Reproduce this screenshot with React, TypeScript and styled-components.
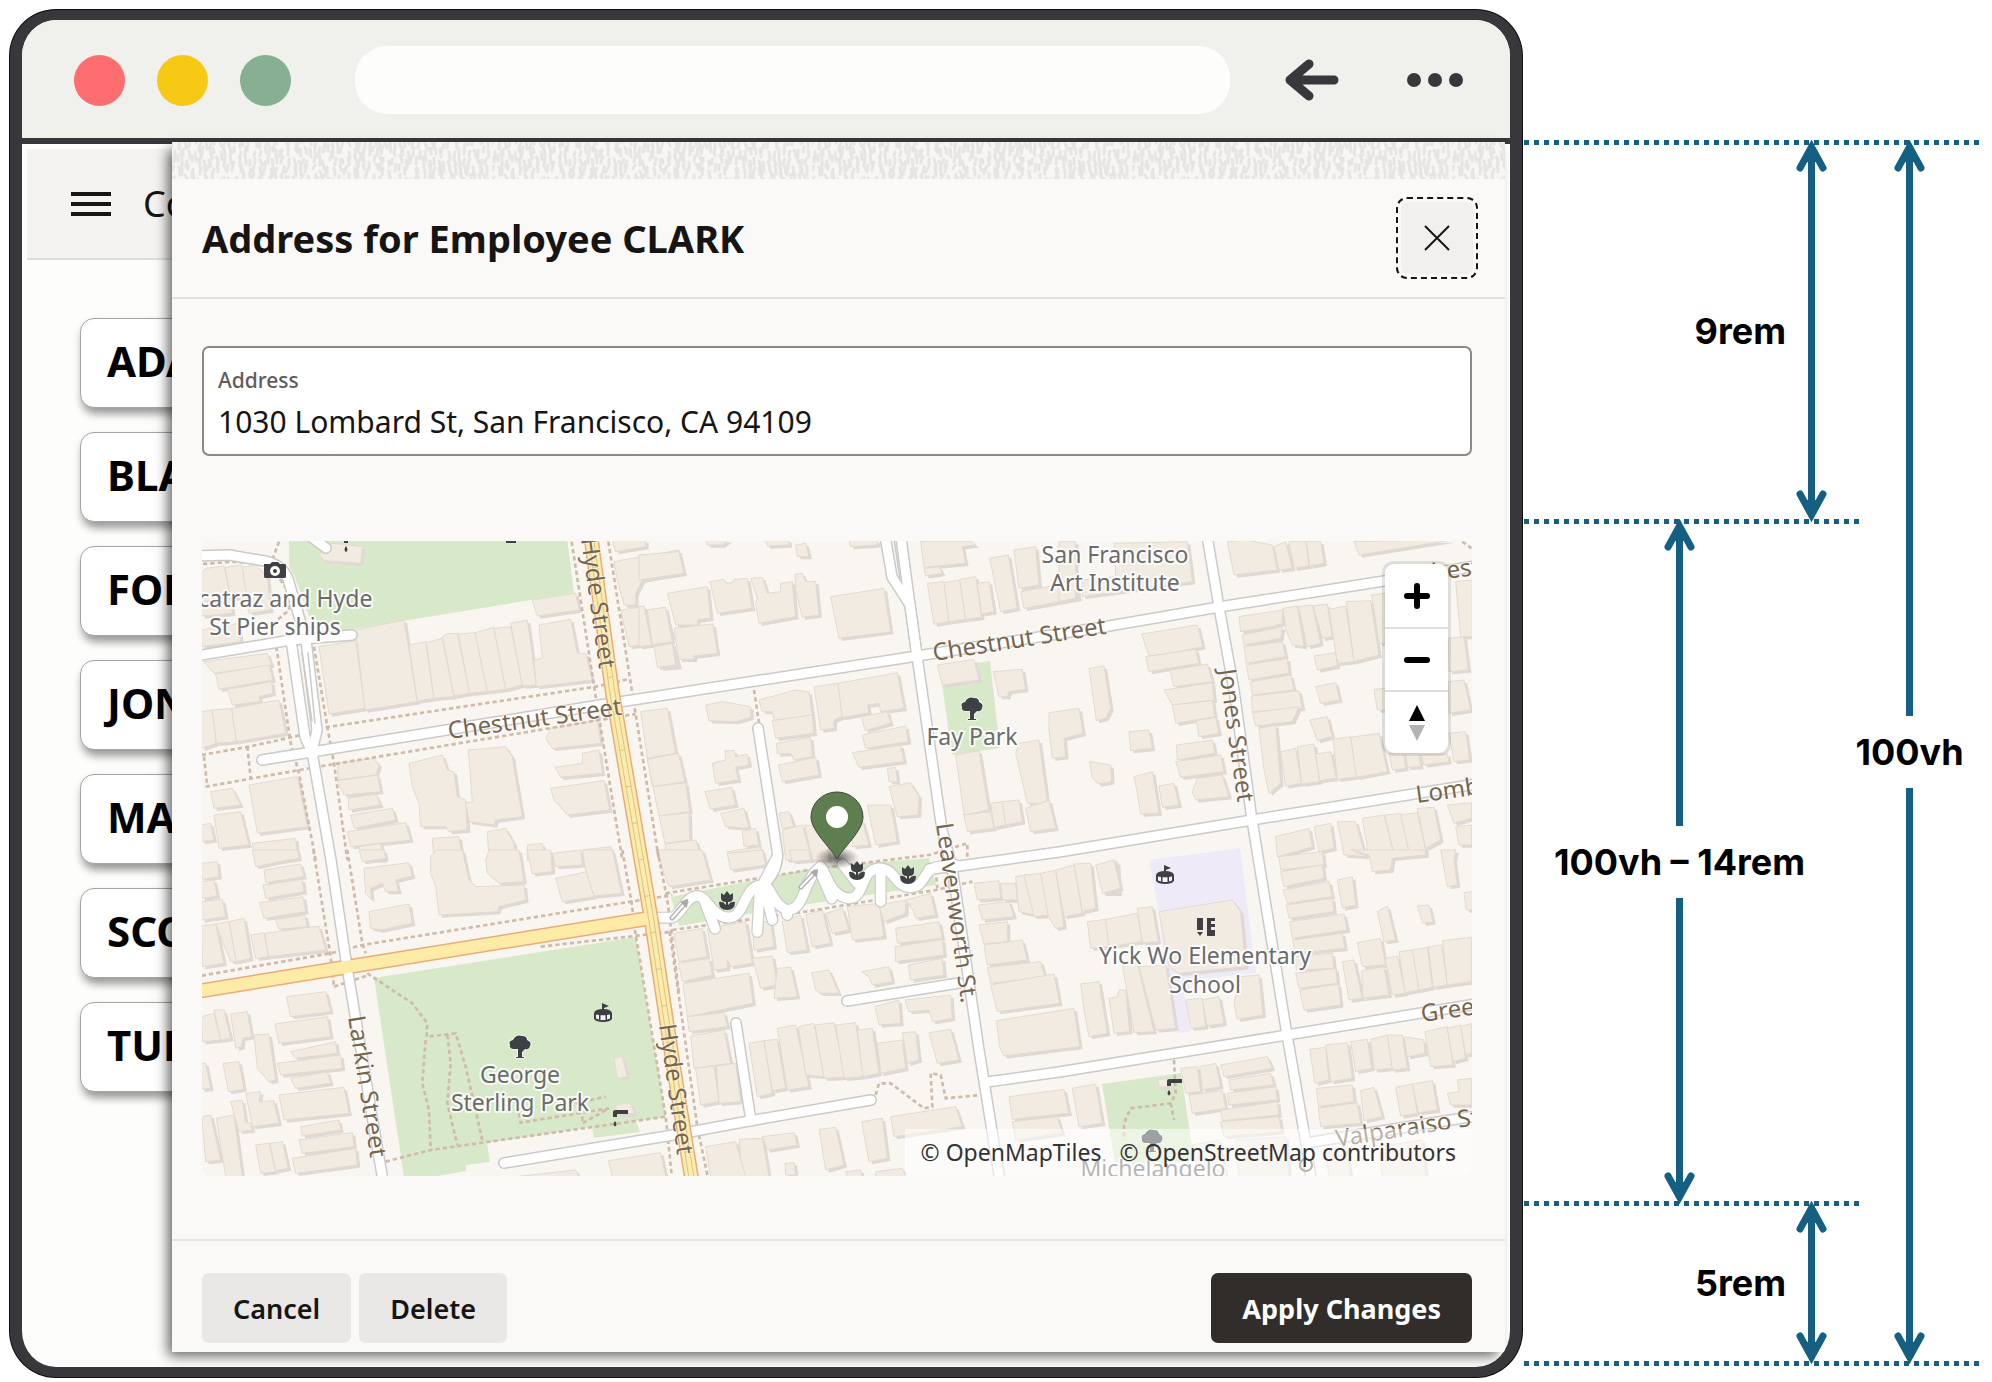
import React from "react";
import styled, { createGlobalStyle } from "styled-components";

const UI_FONT = `"Noto Sans", "Open Sans", sans-serif`;
const NOTE_FONT = `Inter, "Liberation Sans", sans-serif`;
const INK = "#161513";
const FRAME = "#38373c";
const BLUE = "#156082";

const GlobalStyle = createGlobalStyle`
  *, *::before, *::after { box-sizing: border-box; }
  body { margin: 0; background: #fff; font-family: ${UI_FONT}; color: ${INK}; }
  button, input { font: inherit; color: inherit; }
`;

/* ---------- page ---------- */

const Root = styled.div`
  display: grid;
  grid-template-columns: minmax(0, 1514fr) minmax(0, 469fr);
  min-height: 100vh;
  padding: 10px 0 5px 9px;
`;

const Browser = styled.section`
  display: flex;
  flex-direction: column;
  overflow: hidden;
  border: solid ${FRAME};
  border-width: 10px 12px;
  border-radius: 46px;
  margin: 0 1px;
  box-shadow: 0 0 0 1px #0d0d0f;
  background: #fdfdfb;
`;

const Toolbar = styled.header`
  display: flex;
  align-items: center;
  height: 124px;
  padding: 2px 46px 0 52px;
  border-bottom: 6px solid ${FRAME};
  background: #f0f0ed;
`;

const Lights = styled.div`
  display: flex;
  gap: 32px;
  margin-right: 64px;
`;

const Light = styled.span<{ $color: string }>`
  width: 51px;
  height: 51px;
  border-radius: 50%;
  background: ${(p) => p.$color};
`;

const UrlBar = styled.input`
  flex: 1;
  min-width: 0;
  height: 68px;
  padding: 0 30px;
  border: 0;
  border-radius: 32px;
  background: #fdfdfc;
`;

const ToolButton = styled.button<{ $gap: number }>`
  display: flex;
  margin-left: ${(p) => p.$gap}px;
  padding: 0;
  border: 0;
  background: none;
`;

const Viewport = styled.div`
  position: relative;
  display: flex;
  flex: 1;
  flex-direction: column;
  padding: 5px 5px 0;
`;

const PageHeader = styled.div`
  display: flex;
  align-items: center;
  gap: 32px;
  height: 111px;
  padding: 0 44px;
  border-bottom: 2px solid #e0dcda;
  background: #f4f3f2;
  font-size: 36px;
`;

const MenuButton = styled.button`
  display: flex;
  flex-direction: column;
  gap: 6px;
  width: 40px;
  padding: 0;
  border: 0;
  background: none;
`;

const MenuBar = styled.span`
  height: 4px;
  width: 100%;
  background: ${INK};
`;

const Cards = styled.ul`
  display: flex;
  flex-direction: column;
  gap: 24px;
  margin: 0;
  padding: 58px 53px;
  list-style: none;
`;

const Card = styled.li`
  height: 90px;
  padding: 0 26px;
  border: 1px solid #a5a5a5;
  border-radius: 14px;
  background: #fff;
  box-shadow: 2px 6px 8px rgba(0, 0, 0, 0.4);
  color: #000;
  font-size: 42px;
  font-weight: 700;
  line-height: 84px;
`;

/* ---------- drawer ---------- */

const Drawer = styled.div`
  position: absolute;
  inset: -2px 5px 15px 150px;
  display: flex;
  flex-direction: column;
  background: #faf9f7;
  box-shadow: -6px 6px 12px -2px rgba(0, 0, 0, 0.6);
`;

const Strip = styled.svg`
  display: block;
  flex: none;
  width: 100%;
  height: 37px;
`;

const DrawerHeader = styled.div`
  display: flex;
  align-items: center;
  justify-content: space-between;
  height: 120px;
  padding: 0 27px 0 30px;
  border-bottom: 2px solid #e3e1df;
`;

const Title = styled.h1`
  margin: 0;
  font-size: 38px;
  font-weight: 700;
  line-height: 48px;
`;

const CloseButton = styled.button`
  display: flex;
  align-items: center;
  justify-content: center;
  width: 72px;
  height: 72px;
  margin: 5px;
  padding: 0;
  border: 0;
  border-radius: 6px;
  outline: 2px dashed ${INK};
  outline-offset: 3px;
  background: #f1f0ee;
`;

const DrawerBody = styled.div`
  display: flex;
  flex: 1;
  flex-direction: column;
  gap: 85px;
  padding: 47px 33px 63px 30px;
`;

const Field = styled.label`
  display: flex;
  flex-direction: column;
  height: 110px;
  padding: 17px 14px 0;
  border: 2px solid #8b8885;
  border-radius: 7px;
  background: #fff;
`;

const FieldName = styled.span`
  color: #5f5c59;
  font-size: 21px;
  font-weight: 500;
  line-height: 30px;
`;

const FieldInput = styled.input`
  height: 52px;
  padding: 0;
  border: 0;
  outline: 0;
  background: none;
  font-size: 30px;
`;

const MapBox = styled.div`
  position: relative;
  flex: 1;
  min-height: 300px;
  overflow: hidden;
  border-radius: 8px;
  background: #f9f6f2;
`;

const MapDrawing = styled.svg`
  position: absolute;
  inset: 0;
  width: 100%;
  height: 100%;
  font-family: ${UI_FONT};
  font-size: 24px;
`;

const PlaceNames = styled.g`
  font-size: 23px;
  text-anchor: middle;
`;

const MapControls = styled.div`
  position: absolute;
  top: 23px;
  right: 24px;
  width: 63px;
  border-radius: 9px;
  background: #fff;
  box-shadow: 0 0 0 3px rgba(0, 0, 0, 0.1);
`;

const MapControl = styled.button`
  display: flex;
  align-items: center;
  justify-content: center;
  width: 63px;
  height: 63px;
  padding: 0;
  border: 0;
  background: none;
  & + & {
    border-top: 2px solid #dedede;
  }
`;

const Attribution = styled.div`
  position: absolute;
  right: 0;
  bottom: 0;
  display: flex;
  gap: 18px;
  padding: 0 16px;
  background: rgba(255, 255, 255, 0.5);
  font-size: 23px;
  line-height: 47px;
`;

const CreditLink = styled.a`
  color: #333;
  text-decoration: none;
`;

const DrawerFooter = styled.div`
  display: flex;
  gap: 8px;
  padding: 32px 33px 9px 30px;
  border-top: 2px solid #e6e4e2;
`;

const Button = styled.button<{ $primary?: boolean }>`
  height: 70px;
  padding: 0 31px;
  border: 0;
  border-radius: 7px;
  background: ${(p) => (p.$primary ? "#312d2a" : "#e9e8e6")};
  color: ${(p) => (p.$primary ? "#fff" : INK)};
  font-size: 27px;
  font-weight: ${(p) => (p.$primary ? 700 : 600)};
  margin-left: ${(p) => (p.$primary ? "auto" : "0")};
`;

/* ---------- measurements ---------- */

const Measures = styled.aside`
  display: grid;
  grid-template-columns: minmax(0, 1fr) 120px;
  grid-template-rows: 5px 374px 5px minmax(0, 1fr) 5px 155px 5px;
  padding: 130px 8px 11px 1px;
  color: #000;
  font-family: ${NOTE_FONT};
  font-size: 36px;
  font-weight: 700;
  line-height: 44px;
`;

const Guide = styled.div<{ $row: number; $wide?: boolean }>`
  grid-row: ${(p) => p.$row};
  grid-column: ${(p) => (p.$wide ? "1 / 3" : "1 / 2")};
  background: repeating-linear-gradient(90deg, ${BLUE} 0 5px, transparent 5px 10px);
`;

const SideMeasure = styled.div<{ $row: number }>`
  grid-row: ${(p) => p.$row};
  grid-column: 1;
  display: flex;
  align-items: center;
  justify-content: flex-end;
  gap: 10px;
  margin: -5px 0 -3px;
  padding-right: 37px;
`;

const StackMeasure = styled.div<{ $rows: string; $column: number }>`
  grid-row: ${(p) => p.$rows};
  grid-column: ${(p) => p.$column};
  display: flex;
  flex-direction: column;
  align-items: center;
  gap: 14px;
  margin: -5px 0 -3px;
  padding-right: 29px;
  white-space: nowrap;
`;

const ArrowBox = styled.span<{ $full?: boolean }>`
  display: flex;
  flex-direction: column;
  align-items: center;
  ${(p) => (p.$full ? "align-self: stretch;" : "flex: 1;")}
  min-height: 0;
`;

const Shaft = styled.span`
  flex: 1;
  width: 7px;
  background: ${BLUE};
`;

const HeadSvg = styled.svg`
  display: block;
  flex: none;
`;

const Head = ({ down }: { down?: boolean }) => (
  <HeadSvg width="31" height="32" viewBox="0 0 31 32" aria-hidden="true">
    <g transform={down ? "rotate(180 15.5 16)" : undefined}>
      <path d="M4 28 L15.5 7 L27 28" fill="none" stroke={BLUE} strokeWidth="7" strokeLinecap="round" />
      <path d="M15.5 7V32" stroke={BLUE} strokeWidth="7" />
      <path d="M15.5 4 L8 22 H23Z" fill={BLUE} />
    </g>
  </HeadSvg>
);

const Arrow = ({ up, down, full }: { up?: boolean; down?: boolean; full?: boolean }) => (
  <ArrowBox $full={full}>
    {up && <Head />}
    <Shaft />
    {down && <Head down />}
  </ArrowBox>
);

/* ---------- map data: 480x330 tiles, drawn at three units per pixel ---------- */

type Tile = { x: number; y: number; buildings: string[]; paths: string[] };

const list = (s: string) => s.split("|").map((p) => p.trim());

const tiles: Tile[] = [
  {
    x: -3,
    y: -11,
    buildings: list(
      "20,115 75,108 95,205 8,215 8,130|78,112 128,105 150,200 95,205|130,112 170,105 205,140 215,240 150,250|8,215 95,205 100,250 8,258|8,300 120,280 125,335 8,350|15,395 205,370 218,405 45,430|50,432 210,405 222,450 60,478|85,478 218,455 222,490 180,500 185,515 100,525|8,545 40,540 52,640 8,655|40,540 98,535 112,635 52,640|98,535 240,510 260,610 112,635|360,75 400,40 490,50 485,100 375,92|360,350 470,332 498,535 390,552|470,300 615,270 655,515 498,540|630,345 680,335 705,505 655,513|682,338 730,325 765,500 705,505|730,320 740,312 775,310 812,490 765,498|778,312 828,308 865,485 812,490|828,308 885,292 920,478 865,485|885,295 935,290 970,465 920,478|935,280 985,270 1012,465 970,468|1020,285 1115,268 1135,370 1160,370 1180,450 1012,470 1005,390 1030,385|1000,210 1130,190 1140,240 1015,258|1245,95 1440,60 1440,130 1330,150 1310,190 1310,225 1275,225 1255,150|1240,30 1340,30 1340,50 1250,65|1265,240 1335,230 1360,340 1290,350|1345,240 1395,232 1420,320 1362,330|1365,345 1420,338 1440,410 1385,415|415,700 525,685 540,705 530,735 418,750|415,752 535,735 545,785 435,795|448,805 530,792 545,825 450,840|455,855 580,835 590,870 465,895|445,905 620,878 635,930 455,950|630,700 730,675 745,720 765,725 775,800 800,810 805,900 750,905 740,890 665,890 660,820 640,770|808,660 920,650 940,680 945,715 970,860 890,870 885,885 810,875 800,820 820,815|1040,625 1055,595 1195,570 1205,640 1060,655|1150,670 1200,660 1210,730 1085,742 1068,712 1150,700|1055,775 1215,752 1232,840 1105,855 1065,810|1330,545 1405,540 1430,670 1345,680|1345,685 1440,675 1440,765 1360,770|35,785 100,775 125,825 45,835|45,855 125,845 150,945 60,955|150,765 295,740 325,890 175,910|8,885 35,880 45,930 8,935|160,940 290,925 295,975 170,990|700,925 780,920 790,990 705,990|865,905 920,895 945,940 950,990 870,990|985,945 1030,940 1040,990 985,990|1150,960 1235,950 1240,990 1150,990|480,950 545,940 555,990 490,990"
    ),
    paths: list(
      "1118,35 1190,500 1270,990|1228,35 1300,490 1380,990|380,592 1190,470 1290,447|20,770 370,708 1310,552|8,675 150,650 330,610|15,680 25,770|145,650 155,745|232,350 275,640 300,730 350,990|345,350 385,590 405,700 445,990|240,35 220,90|230,130 275,195 270,240 235,270|12,102 100,95 180,100"
    ),
  },
  {
    x: 437,
    y: -11,
    buildings: list(
      "0,75 120,65 135,130 0,150|85,190 205,170 215,265 175,270 175,285 110,285|213,155 255,148 262,160 280,158 285,148 325,145 340,235 235,250|335,145 370,142 385,190 425,185 425,160 460,155 470,260 360,280 350,220 355,205|468,133 490,130 500,155 530,155 540,255 490,262 470,180|575,200 735,175 755,305 600,325|25,240 80,232 100,335 40,345|105,295 222,282 235,370 165,378 165,388 120,388|45,350 100,340 110,405 55,412|0,230 15,228 38,345 0,350|470,45 500,40 510,80 475,80|200,30 270,30 250,45 205,45|380,30 450,30 450,45 385,48|630,30 715,30 715,45 635,50|845,35 1000,35 1010,45 970,50 980,100 855,112|855,115 900,110 910,130 860,138|865,160 915,155 930,275 885,283|915,158 962,150 980,268 930,275|962,148 1010,140 1028,262 980,268|1015,160 1050,155 1065,245 1028,252|1052,85 1108,75 1135,235 1085,245|1125,60 1190,50 1200,165 1140,175|1145,185 1310,155 1320,205 1155,235|5,545 85,535 110,670 25,685|25,688 118,670 138,755 42,770|42,770 140,758 152,845 60,858|60,858 150,848 152,930 78,940|78,942 170,930 190,990 85,990|200,525 250,515 335,530 335,562 290,575 210,572|360,510 470,480 510,485 520,560 405,570 400,545 370,545|525,470 597,460 610,560 585,570 585,595 545,600|597,460 775,428 795,535 725,545 720,520 685,525 690,548 610,563|400,572 520,555 525,610 410,625|412,640 515,622 520,680 465,690 455,670 415,672|418,705 530,682 540,735 430,755|668,560 745,545 755,580 678,602|670,615 800,588 808,635 680,655|640,668 785,645 795,695 660,712|220,700 260,690 258,662 285,662 290,680 325,672 330,705 290,712 298,750 230,760|198,785 278,772 290,825 215,838|245,850 315,835 330,895 260,890|310,905 350,895 360,945 315,950|265,965 365,950 370,990 270,990|430,900 490,885 520,990 440,990|497,885 560,890 570,990 520,990|420,850 450,845 465,890 430,895|745,715 770,712 775,755 750,755|750,770 815,758 840,800 838,855 775,860|685,825 755,825 775,935 710,945|640,880 670,870 690,945 640,950|895,405 1005,388 1020,450 910,465|1063,425 1150,418 1160,478 1110,485 1105,500 1080,500|1350,415 1395,408 1415,535 1400,565 1372,572|1230,548 1320,535 1332,610 1275,625 1280,680 1240,685 1230,600|1352,695 1415,705 1418,755 1380,762 1360,745|950,675 1020,662 1045,815 1050,840 975,855|1130,670 1140,640 1200,630 1220,780 1225,820 1165,820|975,855 1055,845 1065,895 985,905|1055,820 1090,815 1100,885 1065,892|1090,815 1140,810 1150,875 1100,885|1160,835 1230,810 1250,895 1175,905"
    ),
    paths: list("345,480 360,580"),
  },
  {
    x: 857,
    y: -11,
    buildings: list(
      "505,35 560,30 640,45 655,120 525,135|645,50 680,35 700,115 660,120|690,35 740,35 750,108 705,115|742,35 785,35 795,100 752,108|885,35 1180,30 900,75|165,40 385,35 400,155 70,200 70,150 170,140|0,35 50,35 50,205 0,215|248,312 415,285 432,350 335,370 270,378|260,380 410,358 420,400 270,425|332,420 445,402 460,455 345,470|315,480 460,458 465,510 340,525|340,525 460,512 468,560 350,580|412,572 470,562 480,610 420,620|352,645 460,630 468,670 355,690|350,695 485,675 495,725 365,742|400,785 415,745 490,735 510,800 410,810|210,605 270,600 280,655 215,662|225,740 280,725 300,850 245,852 235,790|300,768 345,760 360,825 310,832|540,260 670,240 670,280 640,290 545,305|550,315 670,290 665,325 555,345|555,350 670,335 680,380 562,400|562,405 685,385 690,430 570,450|575,455 695,435 705,480 580,495|578,498 720,482 730,535 580,545|580,548 720,530 700,575 590,588|600,595 650,585 655,640 665,760 630,790 615,720|672,235 715,228 735,350 700,345 680,300|718,230 760,225 785,340 745,350|762,228 805,222 820,320 790,325|810,238 860,228 885,395 835,400|862,215 935,212 960,375 885,395|938,195 978,190 978,340 960,340|765,378 830,368 835,408 775,420|770,470 830,458 842,510 785,520|752,570 805,560 820,620 775,632|665,665 710,655 728,760 680,768|715,650 765,642 782,755 728,762|770,672 815,665 832,745 782,752|822,628 875,620 895,740 835,748|875,622 960,610 985,725 892,742|990,670 1035,670 1040,715 1000,720|1040,670 1080,670 1085,710 1045,712|1085,672 1165,672 1170,695 1095,705|1170,610 1220,605 1232,690 1185,695|1168,455 1215,450 1235,540 1170,550|1168,325 1215,320 1228,420 1170,425|1190,155 1240,150 1240,320 1205,320|945,478 980,475 980,540 955,540|650,920 750,895 760,950 710,965 655,980|765,890 815,880 825,955 780,965|835,875 890,875 920,980 855,975|910,865 975,855 1005,970 930,985|977,855 1025,850 1050,965 1005,972|1025,855 1075,848 1100,960 1050,965|1075,835 1125,832 1145,930 1100,955|1165,825 1238,818 1238,865 1185,880|1190,890 1238,885 1238,945 1200,945"
    ),
    paths: list("1210,35 1238,55"),
  },
  {
    x: -3,
    y: 309,
    buildings: list(
      "8,40 55,35 60,80 8,88|8,95 45,90 55,138 8,145|8,155 70,148 80,200 8,210|160,0 295,0 300,25 240,35 170,50|195,60 305,42 315,80 200,98|192,105 310,88 315,125 200,145|182,158 312,140 320,185 195,205|230,208 318,195 325,230 240,238|8,228 50,222 75,340 10,350|50,222 90,215 112,335 95,335|90,215 135,205 155,325 112,335|155,255 195,248 208,320 170,325|197,250 360,228 380,300 208,320|480,0 555,0 560,25 490,35|495,55 630,38 640,78 590,90 600,125 560,125 550,100 515,115 518,150 500,130|510,185 630,162 640,220 545,240 515,235|695,20 710,0 790,0 810,90 830,110 975,105 980,150 900,170 895,185 720,195 710,110 695,70|860,30 870,0 960,0 975,95 900,100 865,70|985,0 1055,0 1060,65 1000,72|1060,10 1145,0 1150,45 1070,50|1070,85 1165,65 1185,140 1090,155|1150,0 1240,0 1268,130 1185,138 1160,60|262,440 380,425 395,485 275,500|228,522 385,500 395,560 240,580|275,605 410,575 415,610 290,625|235,640 425,615 430,655 245,675|275,685 385,665 395,700 290,715|240,735 435,712 450,790 255,810|305,830 420,810 425,840 310,858|300,870 460,848 465,890 310,910|280,925 470,895 475,945 290,970|8,500 45,490 65,570 10,575|45,480 75,480 95,565 65,570|95,492 145,485 158,560 130,565 128,590 110,595|165,555 210,552 230,690 210,695 175,655|72,640 120,635 135,718 88,725|8,640 20,640 35,715 8,718|140,730 185,725 180,755 225,752 240,820 160,830|95,755 130,750 140,815 155,820 160,840 120,845|52,805 105,795 130,980 80,980|8,800 35,795 65,930 20,935|170,885 210,880 230,965 185,970|212,880 250,875 268,955 230,962|950,980 1130,960 1140,980|1228,932 1385,908 1400,980 1240,980|1245,625 1270,620 1285,680 1255,685|1250,765 1295,758 1305,790 1255,795"
    ),
    paths: list(
      "1270,0 1298,160 1308,240 1400,800 1418,975|1375,0 1405,150 1440,430|343,0 395,320 405,410|445,0 490,280 500,310|8,377 395,310 490,285 1295,155 1420,135|1025,290 1420,245|405,410 510,375|505,370 640,460 685,520 683,560 770,550 800,650 850,870|680,570 670,700 690,780 695,900|745,555 755,640 745,760 775,885|560,935 695,900 1400,800|960,790 965,818 1230,775 1150,820 1150,790|1130,760 1220,740"
    ),
  },
  {
    x: 437,
    y: 309,
    buildings: list(
      "50,0 190,0 215,90 90,110|265,10 370,0 380,45 275,60|450,0 510,0 515,30 460,35|105,250 190,235 205,320 120,335|205,235 320,215 340,340 275,350 265,330 265,355 225,360|340,215 395,215 405,290 345,300|430,215 485,195 505,300 445,308|500,195 550,180 575,280 520,290|560,190 610,175 630,240 580,250|625,170 720,160 735,260 640,270|720,165 800,150 800,190 735,215|800,150 875,130 890,195 830,205 825,185|770,235 900,215 910,265 775,280|768,290 910,268 915,315 770,335|808,345 910,325 915,375 815,390|118,340 210,325 220,375 130,395|132,400 330,370 342,460 145,500|145,500 255,488 265,530 150,545|155,558 255,540 275,640 165,655|170,655 225,648 240,755 185,765|232,648 290,640 305,755 240,760|340,325 400,318 415,405 365,415|415,355 455,352 475,440 405,445|518,368 570,360 600,430 545,430 530,420|668,365 750,350 760,395 700,405 690,380|708,470 780,450 785,520 720,525|798,450 935,435 940,505 880,515 870,480 810,485|330,580 375,572 400,730 355,740|375,572 415,568 440,715 400,722|415,535 470,525 510,710 445,720|478,530 525,520 555,680 500,675|528,525 585,518 620,682 555,685|590,525 650,518 672,680 615,685|655,540 700,535 720,670 672,680|715,580 790,570 800,655 725,670|790,548 830,545 840,630 805,640|870,548 935,538 960,630 895,640|1005,100 1080,92 1085,145 1015,150|1085,100 1130,100 1135,150 1090,150|1018,165 1110,155 1125,200 1030,210|1020,225 1105,215 1105,275 1035,282|1035,285 1150,270 1165,330 1045,345|1045,352 1205,335 1218,380 1055,400|1055,405 1245,372 1262,460 1075,485|1072,512 1305,475 1322,590 1095,618 1082,590|1130,80 1160,75 1185,195 1140,185|1155,75 1205,70 1230,195 1185,200|1205,70 1250,60 1275,230 1250,235 1228,200|1250,60 1305,45 1330,190 1275,200|1305,42 1355,40 1370,175 1330,185|1375,45 1435,35 1440,130 1395,130|1325,402 1380,395 1405,550 1350,560 1335,480|1110,740 1275,718 1290,790 1120,808|1120,815 1255,800 1270,850 1130,870|1300,715 1370,702 1390,820 1320,830|755,800 950,770 970,830 765,860|668,815 730,805 745,925 690,935|540,838 590,832 615,945 560,960|370,860 465,848 475,885 385,900|300,868 370,865 390,980 310,980|200,890 290,875 320,980 215,980|438,940 465,938 470,975 440,975|620,965 665,960 670,980 625,980|710,965 790,955 800,980 710,980"
    ),
    paths: list(
      "80,130 540,55 870,15 985,-20 985,20|100,240 500,185 890,120 1000,95|890,60 895,115|92,245 175,830 205,975|710,735 720,700 755,700 855,775 880,770 875,670 905,675 920,745 1025,735"
    ),
  },
  {
    x: 857,
    y: 309,
    buildings: list(
      "110,45 165,30 185,115 130,130|85,215 140,208 150,290 95,295|140,208 235,190 250,275 150,290|235,175 280,170 298,275 250,280|300,185 520,150 545,185 560,350 360,370 330,350|150,445 175,440 180,420 200,420 212,545 165,550|190,345 235,340 285,545 225,548|240,350 320,345 350,535 290,540|380,450 430,445 440,530 395,535|430,450 480,440 495,520 445,528|525,460 545,380 600,375 612,495 535,508|660,20 790,5 795,45 665,60|665,65 790,45 795,85 675,110|672,120 810,95 820,140 685,160|682,165 820,145 825,185 690,205|692,215 855,192 865,240 700,265|700,270 850,250 858,295 710,310|708,320 820,310 825,355 712,360|710,370 830,355 835,400 720,415|722,420 838,402 845,465 735,480|835,90 880,80 890,165 850,175|875,0 1100,0 1100,15 1000,25 995,60 940,65 930,15|955,185 985,168 1010,270 975,275|1075,168 1110,165 1122,215 1092,220|1145,0 1190,0 1185,30 1195,105 1165,110|1215,128 1240,125 1240,180 1222,180|895,278 965,265 980,345 910,350|850,335 885,330 910,445 870,450|908,362 975,350 990,435 912,445|978,325 1015,318 1040,430 1000,435|1020,305 1060,300 1080,420 1038,428|1060,300 1105,292 1120,412 1080,420|1108,290 1148,285 1165,405 1122,412|1150,272 1238,262 1238,395 1165,405|752,598 800,592 810,690 768,700|800,585 865,578 880,685 815,695|875,575 925,568 938,655 890,665|935,568 985,555 1000,655 945,660|985,555 1030,555 1045,655 1000,660|1035,560 1095,570 1098,610 1045,620|1098,545 1165,530 1182,645 1115,650|1165,535 1205,525 1220,625 1182,635|1205,530 1238,520 1238,610 1220,615|772,715 880,705 885,755 778,770|778,775 895,758 905,820 785,830|905,722 945,712 970,800 915,812|1010,712 1060,702 1075,790 1025,798|1060,702 1120,692 1135,780 1078,788|1165,730 1200,725 1195,690 1238,685 1238,765 1175,765|365,655 415,650 425,725 380,730|422,650 470,640 485,710 430,720|485,645 625,620 640,655 495,680|510,690 635,670 645,705 515,720|505,730 650,710 655,750 510,765|485,780 655,755 660,795 490,812|485,815 660,800 668,845 495,860|390,735 490,722 500,775 400,790|295,690 325,685 330,710 300,712|400,885 480,870 500,980 420,980|530,870 680,860 690,980 540,980|800,900 860,890 875,980 810,980|960,890 1090,870 1100,980 970,980"
    ),
    paths: list("345,630 350,730 335,760 215,775 195,820 195,870|335,760 345,810"),
  },
];

const roads = list(
  "M60 219 L110 211 L410 162 L437 158 L715 115 L907 85 L1017 66 L1182 40 L1280 24|M682 -11 L690 36 L708 64 L715 115|M698 -11 L708 64 L715 115 L740 289 L750 326 L777 509 L799 646|M1004 -11 L1017 66 L1032 149 L1050 279 L1085 494 L1104 602 L1110 646|M1104 602 L1280 574|M727 328 L750 326 L857 311 L1050 279 L1280 242|M785 541 L857 531 L1085 494 L1280 462|M-6 15 L27 14 L57 19 Q80 22 86 38 L104 99 L115 189 L110 211|M-6 115 L89 99 L150 94|M89 99 L103 196 L110 211 L129 319 L145 426 L182 646|M104 -8 L124 7|M302 622 L477 593 L547 580 L669 559|M534 482 L549 580|M645 460 L757 442|M556 187 L575 309 Q578 325 564 342"
);

const lombardBends =
  "M50,203 L100,203 C130,190 140,138 175,138 C205,138 215,200 270,203 C320,200 310,110 370,105 C400,110 400,165 445,180 C500,180 490,90 545,50 C560,60 570,140 630,145 C680,145 660,60 720,55 C770,55 765,110 815,112 C860,112 850,55 900,50 L950,45 M195,150 L228,236 M362,120 L355,246 M375,110 L400,210 M550,80 L578,146 M725,60 L725,155 M610,42 L655,100 M415,20 L370,105 M440,180 L445,195";

const HYDE = "M388 -11 L410 149 L449 377 L470 516 L491 646";
const LOMBARD_WEST = "M-8 451 L145 426 L449 377";

type StreetLabel = [string, number, number, number];
const streetLabels: StreetLabel[] = [
  ["Chestnut Street", 247, 198, -8],
  ["Chestnut Street", 732, 120, -9],
  ["Chestnut", 1216, 42, -8],
  ["Lombard Street", 1215, 262, -8],
  ["Greenwich Street", 1220, 481, -8],
  ["Valparaiso St", 1135, 606, -9],
  ["Hyde Street", 379, -2, 82],
  ["Hyde Street", 457, 484, 82],
  ["Larkin Street", 146, 476, 81],
  ["Jones Street", 1017, 129, 82],
  ["Leavenworth St.", 734, 283, 82],
];

type PlaceLabel = [string, number, number];
const placeLabels: PlaceLabel[] = [
  ["Alcatraz and Hyde", 73, 66],
  ["St Pier ships", 73, 94],
  ["San Francisco", 913, 22],
  ["Art Institute", 913, 50],
  ["Fay Park", 770, 204],
  ["George", 318, 542],
  ["Sterling Park", 318, 570],
  ["Yick Wo Elementary", 1003, 423],
  ["School", 1003, 452],
  ["Michelangelo", 951, 636],
];

const DARK = "#3f4044";

const Tree = ({ x, y }: { x: number; y: number }) => (
  <path
    transform={`translate(${x} ${y})`}
    d="M-2 11 V3 L-7 3 Q-11 2 -10 -1 Q-12 -5 -7 -6 Q-4 -12 2 -10 Q7 -10 7 -6 Q12 -4 10 0 Q9 4 5 3 L2 6 V11 H4 V12 H-4 V11Z"
    fill={DARK}
    stroke="#fff"
    strokeWidth="2"
    strokeOpacity="0.6"
    paintOrder="stroke"
  />
);

const Pavilion = ({ x, y }: { x: number; y: number }) => (
  <g transform={`translate(${x} ${y})`} fill={DARK}>
    <path d="M-1 -10 L6 -7 L1 -5 V-3 H-1Z" />
    <path d="M-9 0 Q-8 -4 0 -4 Q8 -4 9 0 V6 Q7 9 0 9 Q-7 9 -9 6Z" />
    <path d="M-7 1.500 L-4 2 V6.500 L-7 5.500Z M-2.500 2.200 H2.500 V7 H-2.500Z M4 2 L7 1.500 V5.500 L4 6.500Z" fill="#f4f2f6" />
  </g>
);

const Flower = ({ x, y }: { x: number; y: number }) => (
  <g transform={`translate(${x} ${y})`} fill={DARK}>
    <path d="M-6 -8 L-3 -6 L0 -10 L3 -6 L6 -8 V-3 Q6 1 1 1 V4 Q4 0 8 1 Q8 9 0 9 Q-8 9 -8 1 Q-4 0 -1 4 V1 Q-6 1 -6 -3Z" />
  </g>
);

const Tap = ({ x, y }: { x: number; y: number }) => (
  <g transform={`translate(${x} ${y})`} fill={DARK}>
    <path d="M-7 -1 V-6 Q-7 -8 -4 -8 H8 V-4 H-3 V-1Z" />
    <path d="M-5 3 Q-2 7 -5 8.500 Q-8 7 -5 3Z" />
  </g>
);

const CityMap = () => (
  <MapDrawing viewBox="0 0 1270 635" preserveAspectRatio="xMidYMid slice" role="img" aria-label="Map">
    <g fill="#d8e9c9">
      <path d="M87 -4 H365 L372 52 L134 91 L107 75 L92 34 Q87 28 87 22Z" />
      <path d="M172 437 L434 396 L464 576 L434 580 L438 591 L392 597 L390 586 L285 602 L288 621 L264 624 L264 630 L230 636 H202Z" />
      <path d="M774 122 L788 120 L798 207 L750 214 L739 136Z" />
      <path d="M900 543 L979 532 L992 619 L914 629Z" />
      <path d="M469 356 L617 326 L727 317 L734 344 L600 364 L477 385Z" />
    </g>
    <path d="M947 319 L1038 307 L1054 432 L1000 438 L982 452 L988 491 L976 492 L970 452 L964 432 L957 372Z" fill="#efeaf7" />
    {tiles.map((t) => (
      <g key={`${t.x}:${t.y}`} transform={`translate(${t.x} ${t.y}) scale(0.33333)`}>
        {t.buildings.map((b) => (
          <polygon key={b} points={b} transform="translate(9 8)" fill="#dfd9d5" />
        ))}
        {t.buildings.map((b) => (
          <polygon key={b} points={b} fill="#f2ebe1" stroke="#e2dad1" strokeWidth="3" />
        ))}
      </g>
    ))}
    {tiles.map((t) => (
      <g
        key={`${t.x}:${t.y}`}
        transform={`translate(${t.x} ${t.y}) scale(0.33333)`}
        fill="none"
        stroke="#cfbbaa"
        strokeWidth="8"
        strokeDasharray="13 9"
      >
        {t.paths.map((p) => (
          <polyline key={p} points={p} />
        ))}
      </g>
    ))}
    <g fill="none" strokeLinecap="round" strokeLinejoin="round">
      <g stroke="#cbcac9" strokeWidth="12">
        {roads.map((d) => (
          <path key={d} d={d} />
        ))}
        <path d={lombardBends} transform="translate(437 309) scale(0.33333)" strokeWidth="36" />
      </g>
      <path d={LOMBARD_WEST} stroke="#e9ac77" strokeWidth="15" />
      <g stroke="#fff" strokeWidth="9">
        {roads.map((d) => (
          <path key={d} d={d} />
        ))}
        <path d={lombardBends} transform="translate(437 309) scale(0.33333)" strokeWidth="29" />
      </g>
      <path d={HYDE} stroke="#e9ac77" strokeWidth="15" />
      <path d={LOMBARD_WEST} stroke="#feeba8" strokeWidth="12" />
      <path d={HYDE} stroke="#feeba8" strokeWidth="12" />
      <path d={HYDE} stroke="#d3c49a" strokeWidth="6" />
      <path d={HYDE} stroke="#feeba8" strokeWidth="4" />
      <path d={HYDE} stroke="#d3c49a" strokeWidth="6" strokeDasharray="1 36" strokeLinecap="butt" />
      <path d="M692 -2 L698 38 M100 112 L110 180 M106 112 L113 182" stroke="#cbcac9" strokeWidth="1.500" />
      <path d="M470 377 L484 361 M599 346 L613 331" stroke="#b5b5b5" strokeWidth="5" />
      <path d="M470 377 L484 361 M599 346 L613 331" stroke="#fff" strokeWidth="2" />
    </g>
    <path d="M486 358 L485 367 L478 361Z M616 328 L615 337 L608 331Z" fill="#aaa" />
    <g fill="#76654f" stroke="#fff" strokeOpacity="0.5" strokeWidth="2" paintOrder="stroke">
      {streetLabels.map(([name, x, y, turn]) => (
        <text key={`${name}${x}`} transform={`translate(${x} ${y}) rotate(${turn})`}>
          {name}
        </text>
      ))}
    </g>
    <PlaceNames fill="#6b6b6b" stroke="#fff" strokeOpacity="0.8" strokeWidth="4" strokeLinejoin="round" paintOrder="stroke">
      {placeLabels.map(([name, x, y]) => (
        <text key={name} x={x} y={y}>
          {name}
        </text>
      ))}
    </PlaceNames>
    <circle cx="1104" cy="624" r="6" fill="none" stroke="#76654f" strokeWidth="2" />
    <Tree x={770} y={167} />
    <Tree x={318} y={505} />
    <Tree x={950} y={599} />
    <Pavilion x={401} y={472} />
    <Pavilion x={963} y={334} />
    <Flower x={525} y={360} />
    <Flower x={655} y={330} />
    <Flower x={706} y={334} />
    <Tap x={418} y={577} />
    <Tap x={972} y={546} />
    <g fill={DARK}>
      <path d="M62 23 H68 L70 21 H76 L78 23 H83 Q84 23 84 25 V35 Q84 37 83 37 H63 Q62 37 62 35 V25Z" />
      <path d="M995 377 H1001 V389 H995Z M995 391 H1001 L998 395Z M1005 377 H1013 V380 H1009 V383 H1013 V386 H1009 V389 H1013 V395 H1005Z" />
      <path d="M142 0 H146 V2 H142Z M144 5 Q147 9 144 11 Q141 9 144 5Z M304 0 H314 V2 H304Z" />
    </g>
    <circle cx="73" cy="30" r="5" fill="#fff" />
    <circle cx="73" cy="30" r="2" fill={DARK} />
    <defs>
      <radialGradient id="pinShade">
        <stop offset="0" stopColor="#000" stopOpacity="0.6" />
        <stop offset="1" stopColor="#000" stopOpacity="0" />
      </radialGradient>
    </defs>
    <ellipse cx="635" cy="317" rx="22" ry="11" fill="url(#pinShade)" />
    <path
      d="M635 318 C630 308 609 290 609 276 A26 25 0 0 1 661 276 C661 290 640 308 635 318Z"
      fill="#5f7e4f"
      stroke="#3f4a3c"
    />
    <circle cx="635" cy="276" r="11" fill="#fff" />
  </MapDrawing>
);

/* short vertical brush strokes, scattered by a small fixed-seed generator */
const brushStrokes = (() => {
  let seed = 7;
  const next = () => {
    seed = (seed * 16807) % 2147483647;
    return seed / 2147483647;
  };
  const parts: string[] = [];
  for (let row = 0; row < 5; row += 1) {
    for (let col = 0; col < 64; col += 1) {
      const x = Math.round(col * 5 + next() * 4);
      const y = Math.round(row * 9 - 5 + next() * 7);
      const lean = Math.round(next() * 4 - 2);
      const length = Math.round(4 + next() * 5);
      parts.push(`M${x} ${y}q${lean} ${Math.round(length / 2)} ${lean} ${length}`);
    }
  }
  return parts.join("");
})();

const BrushStrip = () => (
  <Strip aria-hidden="true">
    <defs>
      <pattern id="brush" width="320" height="37" patternUnits="userSpaceOnUse">
        <rect width="320" height="37" fill="#f7f6f4" />
        <path d={brushStrokes} fill="none" stroke="#e6e5e3" strokeWidth="3" strokeLinecap="round" />
      </pattern>
    </defs>
    <rect width="100%" height="37" fill="url(#brush)" />
  </Strip>
);

const employees = ["ADAMS", "BLAKE", "FORD", "JONES", "MARTIN", "SCOTT", "TURNER"];

export default function App() {
  return (
    <>
      <GlobalStyle />
      <Root>
        <Browser>
          <Toolbar>
            <Lights>
              <Light $color="#fe6d70" />
              <Light $color="#f6c915" />
              <Light $color="#87b092" />
            </Lights>
            <UrlBar aria-label="Location" />
            <ToolButton $gap={54} aria-label="Back">
              <svg width="56" height="44" viewBox="0 0 56 44">
                <path d="M25 6 L6 22 L25 38 M8 22 H50" fill="none" stroke={FRAME} strokeWidth="9" strokeLinecap="round" strokeLinejoin="round" />
              </svg>
            </ToolButton>
            <ToolButton $gap={66} aria-label="More">
              <svg width="58" height="16" viewBox="0 0 58 16">
                <g fill={FRAME}>
                  <circle cx="8" cy="8" r="7" />
                  <circle cx="29" cy="8" r="7" />
                  <circle cx="50" cy="8" r="7" />
                </g>
              </svg>
            </ToolButton>
          </Toolbar>
          <Viewport>
            <PageHeader>
              <MenuButton aria-label="Menu">
                <MenuBar />
                <MenuBar />
                <MenuBar />
              </MenuButton>
              <span>Co</span>
            </PageHeader>
            <Cards>
              {employees.map((name) => (
                <Card key={name}>{name}</Card>
              ))}
            </Cards>
            <Drawer role="dialog" aria-labelledby="drawer-title">
              <BrushStrip />
              <DrawerHeader>
                <Title id="drawer-title">Address for Employee CLARK</Title>
                <CloseButton aria-label="Close">
                  <svg width="26" height="26" viewBox="0 0 26 26">
                    <path d="M1 1 L25 25 M25 1 L1 25" stroke={INK} strokeWidth="2" />
                  </svg>
                </CloseButton>
              </DrawerHeader>
              <DrawerBody>
                <Field>
                  <FieldName>Address</FieldName>
                  <FieldInput defaultValue="1030 Lombard St, San Francisco, CA 94109" />
                </Field>
                <MapBox>
                  <CityMap />
                  <MapControls>
                    <MapControl aria-label="Zoom in">
                      <svg width="26" height="26" viewBox="0 0 26 26">
                        <path d="M13 3 V23 M3 13 H23" stroke="#000" strokeWidth="6" strokeLinecap="round" />
                      </svg>
                    </MapControl>
                    <MapControl aria-label="Zoom out">
                      <svg width="26" height="26" viewBox="0 0 26 26">
                        <path d="M3 13 H23" stroke="#000" strokeWidth="6" strokeLinecap="round" />
                      </svg>
                    </MapControl>
                    <MapControl aria-label="Reset north">
                      <svg width="18" height="38" viewBox="0 0 18 38">
                        <path d="M9 1 L17 17 H1Z" fill="#000" />
                        <path d="M9 37 L17 21 H1Z" fill="#b3b3b3" />
                      </svg>
                    </MapControl>
                  </MapControls>
                  <Attribution>
                    <CreditLink href="#openmaptiles">© OpenMapTiles</CreditLink>
                    <CreditLink href="#openstreetmap">© OpenStreetMap contributors</CreditLink>
                  </Attribution>
                </MapBox>
              </DrawerBody>
              <DrawerFooter>
                <Button>Cancel</Button>
                <Button>Delete</Button>
                <Button $primary>Apply Changes</Button>
              </DrawerFooter>
            </Drawer>
          </Viewport>
        </Browser>
        <Measures>
          <Guide $row={1} $wide />
          <Guide $row={3} />
          <Guide $row={5} />
          <Guide $row={7} $wide />
          <SideMeasure $row={2}>
            <span>9rem</span>
            <Arrow up down full />
          </SideMeasure>
          <StackMeasure $rows="4" $column={1}>
            <Arrow up />
            <span>100vh – 14rem</span>
            <Arrow down />
          </StackMeasure>
          <SideMeasure $row={6}>
            <span>5rem</span>
            <Arrow up down full />
          </SideMeasure>
          <StackMeasure $rows="2 / 7" $column={2}>
            <Arrow up />
            <span>100vh</span>
            <Arrow down />
          </StackMeasure>
        </Measures>
      </Root>
    </>
  );
}
